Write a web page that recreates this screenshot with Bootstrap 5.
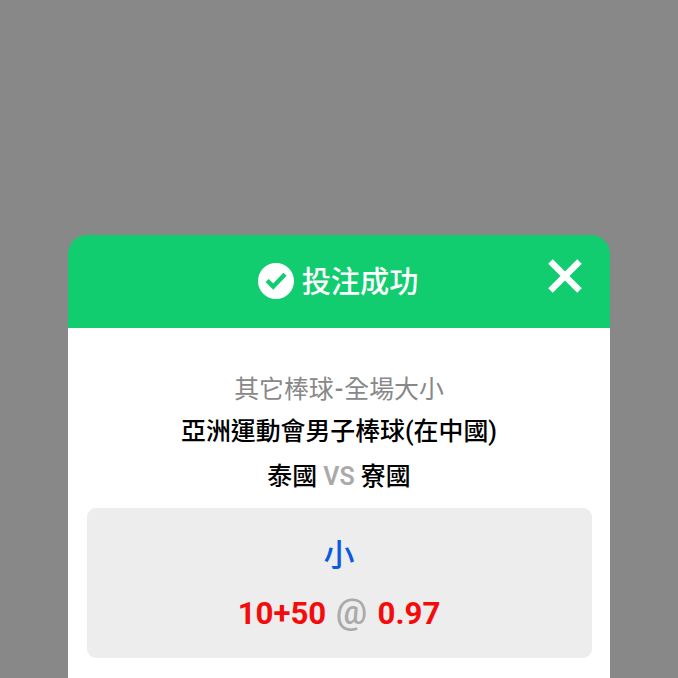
<!DOCTYPE html>
<html lang="zh-Hant">
<head>
<meta charset="utf-8">
<meta name="viewport" content="width=device-width, initial-scale=1">
<title>投注成功</title>
<link href="https://cdn.jsdelivr.net/npm/bootstrap@5.3.0/dist/css/bootstrap.min.css" rel="stylesheet">
<style>
body { background: #888; font-family: Roboto, "Noto Sans CJK TC", sans-serif; font-size: 24.9px; padding-top: 234.5px; }
.bet-dialog { width: 542px; height: 443.5px; }
.bet-header { height: 93.5px; background: #11cd70; border-radius: 19px 19px 0 0; padding: 0 2px 0 0; }
.bet-title { font-size: 29.2px; font-weight: 500; line-height: 40px; padding-top: 1px; }
.bet-close { right: 28px; top: 24.5px; line-height: 0; }
.bet-body { height: 350px; padding: 40px 18.5px 0; line-height: 44px; color: #000; }
.market { color: #888; height: 42px; }
.market .dash { margin: 0 1px; font-weight: 500; }
.league, .teams { font-weight: 500; }
.league { height: 44px; line-height: 43px; }
.versus { color: #aaa; font-weight: 600; }
.teams { height: 45px; line-height: 45px; }
.selection { height: 149.5px; margin-top: 9.4px; border-radius: 9px; background: #ededed; padding-top: 20px; }
.pick { color: #0b5be0; font-size: 31px; font-weight: 500; height: 56px; line-height: 56px; }
.odds { color: #f40b0b; font-size: 31.2px; font-weight: 700; line-height: 60px; }
.odds .at-sign { color: #aaa; font-size: 35px; font-weight: 500; line-height: 1; margin: 0 2.7px 0 1.8px; }
</style>
<script src="https://cdn.jsdelivr.net/npm/bootstrap@5.3.0/dist/js/bootstrap.bundle.min.js"></script>
</head>
<body class="vh-100 overflow-hidden">
<main class="bet-dialog mx-auto overflow-hidden">
  <header class="bet-header position-relative d-flex align-items-center justify-content-center text-white">
    <svg class="me-2" width="36" height="36" viewBox="0 0 36 36" aria-hidden="true"><circle cx="18" cy="18" r="18" fill="#fff"/><path d="M9.2 17.5l6 6 11.8-12.2" fill="none" stroke="#11cd70" stroke-width="4.4"/></svg>
    <span class="bet-title">投注成功</span>
    <button class="bet-close btn p-0 border-0 position-absolute" type="button" aria-label="關閉">
      <svg width="34" height="34" viewBox="0 0 34 34"><path d="M2.5 2.5l29 29M31.5 2.5l-29 29" stroke="#fff" stroke-width="6.4"/></svg>
    </button>
  </header>
  <section class="bet-body bg-white text-center text-nowrap">
    <div class="market">其它棒球<span class="dash">-</span>全場大小</div>
    <div class="league">亞洲運動會男子棒球(在中國)</div>
    <div class="teams">泰國 <span class="versus">VS</span> 寮國</div>
    <div class="selection">
      <div class="pick">小</div>
      <div class="odds">10+50 <span class="at-sign">@</span> 0.97</div>
    </div>
  </section>
</main>
</body>
</html>
